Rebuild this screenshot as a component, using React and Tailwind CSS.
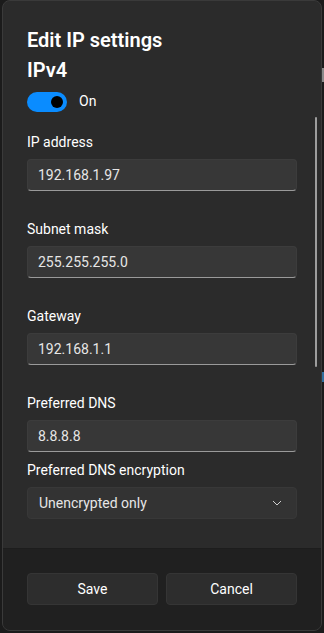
import React from 'react';

const font = { fontFamily: 'Roboto, "Noto Sans", sans-serif' };

function Field({ label, value }) {
    return (
        <div className="flex flex-col">
            <div className="h-[20px] leading-[20px] text-[14px] text-white">{label}</div>
            <div className="mt-[7px] h-[32px] rounded-[4px] bg-[#373737] border border-[#3c3c3c] border-b-[#9a9a9a] flex items-center px-[10px] text-[14px] text-[#e6e6e6]">
                {value}
            </div>
        </div>
    );
}

export default function App() {
    return (
        <div className="w-[324px] h-[633px] bg-[#1b1b1b] relative overflow-hidden" style={font}>
            {/* bits of the window behind */}
            <div className="absolute right-0 top-[68px] w-[2px] h-[14px] bg-[#8a8a8a]" />
            <div className="absolute right-0 top-[372px] w-[2px] h-[10px] bg-[#2f6f9f]" />

            <div className="ml-[2px] w-[320px] h-[631px] rounded-[8px] border border-[#3a3a3a] bg-[#2b2b2b] flex flex-col overflow-hidden relative">
                {/* scrollbar */}
                <div className="absolute right-[4px] top-[116px] w-[2px] h-[250px] rounded-full bg-[#9d9d9d]" />

                <div className="flex-1 px-[24px] pt-[25px]">
                    <h1 className="text-[20px] leading-[28px] font-semibold text-white">Edit IP settings</h1>
                    <h2 className="mt-[2px] text-[20px] leading-[28px] font-semibold text-white">IPv4</h2>

                    <div className="mt-[7px] flex items-center gap-[12px]">
                        <div className="w-[40px] h-[20px] rounded-full bg-[#0a8cff] flex items-center justify-end pr-[4px]">
                            <div className="w-[12px] h-[12px] rounded-full bg-black" />
                        </div>
                        <span className="text-[14px] text-white">On</span>
                    </div>

                    <div className="mt-[20px] flex flex-col gap-[28px]">
                        <Field label="IP address" value="192.168.1.97" />
                        <Field label="Subnet mask" value="255.255.255.0" />
                        <Field label="Gateway" value="192.168.1.1" />
                        <Field label="Preferred DNS" value="8.8.8.8" />
                    </div>

                    <div className="mt-[8px] flex flex-col">
                        <div className="h-[20px] leading-[20px] text-[14px] text-white">Preferred DNS encryption</div>
                        <div className="mt-[7px] h-[32px] rounded-[4px] bg-[#333333] border border-[#383838] flex items-center justify-between pl-[11px] pr-[14px] text-[14px] text-[#e6e6e6]">
                            <span>Unencrypted only</span>
                            <svg width="10" height="6" viewBox="0 0 10 6" fill="none">
                                <path d="M1 1l4 4 4-4" stroke="#cfcfcf" strokeWidth="1" />
                            </svg>
                        </div>
                    </div>
                </div>

                <div className="h-[82px] bg-[#202020] border-t border-[#1d1d1d] px-[24px] pt-[24px] flex gap-[8px]">
                    <button className="flex-1 h-[32px] rounded-[4px] bg-[#2d2d2d] border border-[#353535] text-[14px] text-white">Save</button>
                    <button className="flex-1 h-[32px] rounded-[4px] bg-[#2d2d2d] border border-[#353535] text-[14px] text-white">Cancel</button>
                </div>
            </div>
        </div>
    );
}
